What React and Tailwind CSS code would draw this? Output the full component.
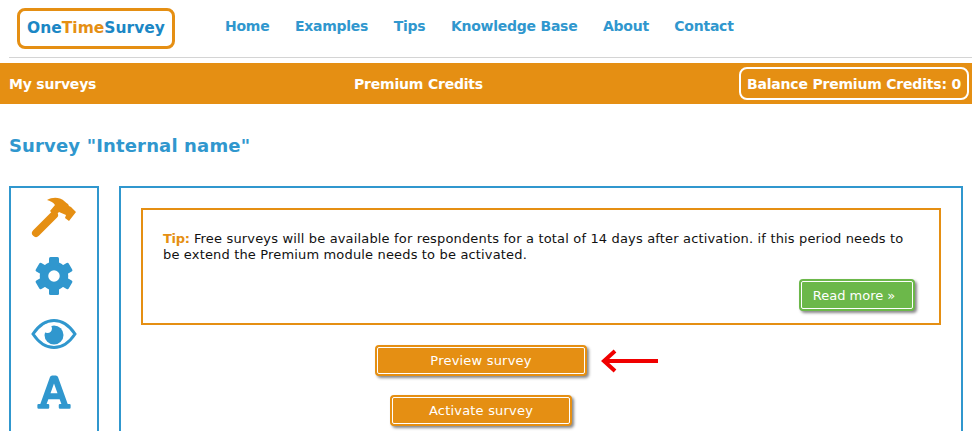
import React from "react";
import { FaFont } from "react-icons/fa";

function Hammer() {
  return (
    <svg width="46" height="42" viewBox="0 0 46 42">
      <path d="M5 36L23 18" fill="none" stroke="#e58f13" strokeWidth="8" strokeLinecap="round" />
      <path d="M16 3C20 .5 25 0 29 1.500C33 3 35 6 37 7L38 9L40 10L45 15L38 24L34 21L35 18L28 15L24 19L19 14L24 8C22 5 19 4 16 3Z" fill="#e58f13" />
    </svg>
  );
}

function Gear() {
  return (
    <svg width="40" height="40" viewBox="0 0 40 40">
      <circle cx="20" cy="20" r="10" fill="none" stroke="#3097ce" strokeWidth="8.500" />
      {[0, 60, 120, 180, 240, 300].map((angle) => (
        <rect key={angle} x="15" y="1" width="10" height="9" rx="1.500" fill="#3097ce" transform={`rotate(${angle} 20 20)`} />
      ))}
    </svg>
  );
}

function Eye() {
  return (
    <svg width="46" height="32" viewBox="0 0 46 32">
      <path d="M2 16C8 7 15 2.500 23 2.500S38 7 44 16C38 25 31 29.500 23 29.500S8 25 2 16Z" fill="none" stroke="#3097ce" strokeWidth="3" />
      <circle cx="23" cy="17" r="9.500" fill="#3097ce" />
      <circle cx="16.500" cy="10.500" r="4.500" fill="#fff" />
    </svg>
  );
}

function NavLink({ children }) {
  return <a className="text-[14px] font-bold tracking-[-0.25px] text-[#3097ce] whitespace-nowrap">{children}</a>;
}

function ActionButton({ children, className }) {
  return (
    <button className={"block rounded-[4px] border-2 border-[#e58f13] bg-[#e58f13] shadow-[2px_2px_3px_#888] " + className}>
      <span className="flex h-full w-full items-center justify-center rounded-[2px] border border-white text-[13px] text-white tracking-[0.2px]">
        {children}
      </span>
    </button>
  );
}

export default function App() {
  return (
    <div className="h-[431px] w-[972px] overflow-hidden bg-white font-['DejaVu_Sans','Verdana',sans-serif]">
      <header className="ml-[9px] flex h-[58px] items-start border-b border-[#d4d4d4]">
        <div className="ml-[8px] mt-[8px] flex h-[41px] w-[158px] items-center justify-center rounded-[8px] border-[3px] border-[#e58f13] text-[15.500px] font-bold">
          <span className="text-[#1b87c5]">One</span>
          <span className="text-[#e58f13]">Time</span>
          <span className="text-[#1b87c5]">Survey</span>
        </div>
        <nav className="ml-[50px] mt-[16px] flex gap-[25.500px]">
          <NavLink>Home</NavLink>
          <NavLink>Examples</NavLink>
          <NavLink>Tips</NavLink>
          <NavLink>Knowledge Base</NavLink>
          <NavLink>About</NavLink>
          <NavLink>Contact</NavLink>
        </nav>
      </header>

      <div className="mt-[5px] flex h-[41px] items-center bg-[#e58f13] pt-[1px] text-[14px] font-bold tracking-[-0.2px] text-white">
        <div className="ml-[9px] w-[345px]">My surveys</div>
        <div className="w-[385px]">Premium Credits</div>
        <div className="-mt-[1px] flex h-[33px] w-[230px] items-center justify-center rounded-[8px] border-2 border-white pt-[1px] whitespace-nowrap">
          Balance Premium Credits: 0
        </div>
      </div>

      <h1 className="ml-[9px] mt-[29px] text-[18px] font-bold leading-[25px] tracking-[0.15px] text-[#3097ce]">Survey "Internal name"</h1>

      <div className="ml-[9px] mt-[28px] flex gap-[20px]">
        <aside className="flex h-[300px] w-[90px] flex-col items-center gap-[12px] border-2 border-[#3097ce] pt-[7px]">
          <div className="flex h-[46px] items-center justify-center"><Hammer /></div>
          <div className="flex h-[46px] items-center justify-center"><Gear /></div>
          <div className="flex h-[46px] items-center justify-center"><Eye /></div>
          <div className="flex h-[46px] items-center justify-center"><FaFont size={38} color="#3097ce" /></div>
        </aside>

        <main className="h-[300px] w-[844px] border-2 border-[#3097ce] px-[20px] pt-[20px]">
          <div className="h-[117px] w-[800px] border-2 border-[#e58f13] pl-[20px] pr-[30px] pt-[21px]">
            <p className="text-[13px] leading-[16px] tracking-[0.16px] text-[#111]">
              <b className="tracking-[-0.3px] text-[#e58f13]">Tip:</b> Free surveys will be available for respondents for a total of 14 days after activation. if this period needs to be extend the Premium module needs to be activated.
            </p>
            <div className="mt-[16px] flex justify-end">
              <button className="-mr-[6px] h-[32px] w-[116px] rounded-[4px] border-2 border-[#6cb84a] bg-[#6cb84a] shadow-[2px_2px_3px_#888]">
                <span className="flex h-full w-full items-center justify-center rounded-[2px] border border-white pr-[6px] pt-[1px] text-[13px] text-white">Read more »</span>
              </button>
            </div>
          </div>

          <div className="relative mt-[20px] flex justify-start">
            <ActionButton className="ml-[234px] h-[31px] w-[212px]">Preview survey</ActionButton>
            <svg className="absolute left-[460px] top-[3px]" width="58" height="26" viewBox="0 0 58 26">
              <path d="M57 13H4M14 3L3 13L14 23" fill="none" stroke="#f00000" strokeWidth="4" />
            </svg>
          </div>
          <ActionButton className="ml-[249px] mt-[19px] h-[31px] w-[182px]">Activate survey</ActionButton>
        </main>
      </div>
    </div>
  );
}
